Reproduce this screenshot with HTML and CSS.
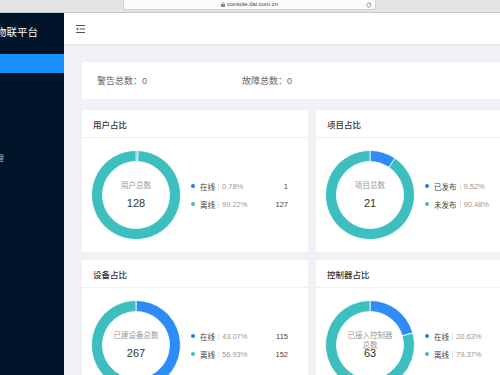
FILE: index.html
```html
<!DOCTYPE html>
<html lang="zh-CN">
<head>
<meta charset="utf-8">
<title>物联平台</title>
<link rel="stylesheet" href="styles.css">
</head>
<body>
<div class="browser-bar">
  <div class="url-field">
    <span></span>
    <span class="url">
      <svg class="lock" width="4" height="5" viewBox="0 0 4 5"><rect x="0" y="2" width="4" height="3" fill="#888"/><path d="M1 2V1.2a1 1 0 0 1 2 0V2" fill="none" stroke="#888" stroke-width="0.6"/></svg>
      console.tlai.com.cn
    </span>
    <svg class="refresh" width="6" height="6" viewBox="0 0 6 6"><path d="M4.9 2.4A2.1 2.1 0 1 0 5 3.4" fill="none" stroke="#777" stroke-width="0.7"/><path d="M3.9 0.8L5.2 2.4L3.5 2.7Z" fill="#777"/></svg>
  </div>
</div>
<div class="app">
  <aside class="sider">
    <div class="logo"><span>物联平台</span></div>
    <ul class="menu">
      <li class="active"></li>
      <li></li>
      <li></li>
      <li></li>
      <li><span class="cut">管理</span></li>
    </ul>
  </aside>
  <div class="main">
    <header class="topbar">
      <svg class="fold" width="9" height="8" viewBox="0 0 9 8"><path d="M0 0.5H9M3.5 4H9M0 7.5H9" stroke="#555" stroke-width="1"/><path d="M0 4L2.2 2.4V5.6Z" fill="#555"/></svg>
    </header>
    <div class="content">
      <div class="stats">
        <div class="stat">警告总数：0</div>
        <div class="stat">故障总数：0</div>
      </div>
      <div class="grid">
        <section class="card">
          <div class="card-head">用户占比</div>
          <div class="card-body">
            <div class="donut">
              <svg width="90" height="90" viewBox="0 0 90 90">
                <path class="seg-b" d="M45 0.5A44.5 44.5 0 0 1 47.18 0.55L46.64 11.54A33.5 33.5 0 0 0 45 11.5Z"/>
                <path class="seg-t" d="M47.18 0.55A44.5 44.5 0 1 1 45 0.5L45 11.5A33.5 33.5 0 1 0 46.64 11.54Z"/>
              </svg>
              <div class="donut-title">用户总数</div>
              <div class="donut-value">128</div>
            </div>
            <div class="legend">
              <div class="legend-row"><i class="dot dot-b"></i><span class="name">在线</span><i class="sep"></i><span class="pct">0.78%</span><span class="val">1</span></div>
              <div class="legend-row"><i class="dot dot-t"></i><span class="name">离线</span><i class="sep"></i><span class="pct">99.22%</span><span class="val">127</span></div>
            </div>
          </div>
        </section>
        <section class="card">
          <div class="card-head">项目占比</div>
          <div class="card-body">
            <div class="donut">
              <svg width="90" height="90" viewBox="0 0 90 90">
                <path class="seg-b" d="M45 0.5A44.5 44.5 0 0 1 70.06 8.23L63.86 17.32A33.5 33.5 0 0 0 45 11.5Z"/>
                <path class="seg-t" d="M70.06 8.23A44.5 44.5 0 1 1 45 0.5L45 11.5A33.5 33.5 0 1 0 63.86 17.32Z"/>
              </svg>
              <div class="donut-title">项目总数</div>
              <div class="donut-value">21</div>
            </div>
            <div class="legend">
              <div class="legend-row"><i class="dot dot-b"></i><span class="name">已发布</span><i class="sep"></i><span class="pct">9.52%</span><span class="val">2</span></div>
              <div class="legend-row"><i class="dot dot-t"></i><span class="name">未发布</span><i class="sep"></i><span class="pct">90.48%</span><span class="val">19</span></div>
            </div>
          </div>
        </section>
        <section class="card">
          <div class="card-head">设备占比</div>
          <div class="card-body">
            <div class="donut">
              <svg width="90" height="90" viewBox="0 0 90 90">
                <path class="seg-b" d="M45 0.5A44.5 44.5 0 0 1 63.77 85.34L59.13 75.37A33.5 33.5 0 0 0 45 11.5Z"/>
                <path class="seg-t" d="M63.77 85.34A44.5 44.5 0 1 1 45 0.5L45 11.5A33.5 33.5 0 1 0 59.13 75.37Z"/>
              </svg>
              <div class="donut-title">已建设备总数</div>
              <div class="donut-value">267</div>
            </div>
            <div class="legend">
              <div class="legend-row"><i class="dot dot-b"></i><span class="name">在线</span><i class="sep"></i><span class="pct">43.07%</span><span class="val">115</span></div>
              <div class="legend-row"><i class="dot dot-t"></i><span class="name">离线</span><i class="sep"></i><span class="pct">56.93%</span><span class="val">152</span></div>
            </div>
          </div>
        </section>
        <section class="card">
          <div class="card-head">控制器占比</div>
          <div class="card-body">
            <div class="donut">
              <svg width="90" height="90" viewBox="0 0 90 90">
                <path class="seg-b" d="M45 0.5A44.5 44.5 0 0 1 87.83 32.94L77.24 35.92A33.5 33.5 0 0 0 45 11.5Z"/>
                <path class="seg-t" d="M87.83 32.94A44.5 44.5 0 1 1 45 0.5L45 11.5A33.5 33.5 0 1 0 77.24 35.92Z"/>
              </svg>
              <div class="donut-title">已接入控制器总数</div>
              <div class="donut-value">63</div>
            </div>
            <div class="legend">
              <div class="legend-row"><i class="dot dot-b"></i><span class="name">在线</span><i class="sep"></i><span class="pct">20.63%</span><span class="val">13</span></div>
              <div class="legend-row"><i class="dot dot-t"></i><span class="name">离线</span><i class="sep"></i><span class="pct">79.37%</span><span class="val">50</span></div>
            </div>
          </div>
        </section>
      </div>
    </div>
  </div>
</div>
</body>
</html>
```
FILE: styles.css
```css
html, body {
  margin: 0;
  padding: 0;
}
body {
  width: 500px;
  height: 375px;
  overflow: hidden;
  background: #f0f2f5;
  font-family: "Liberation Sans", "Noto Sans CJK SC", sans-serif;
}

.browser-bar {
  height: 12px;
  background: #e4e4e4;
  border-bottom: 1px solid #c9c9c9;
  padding-left: 123px;
}
.url-field {
  box-sizing: border-box;
  width: 253px;
  height: 10px;
  background: #fbfbfb;
  border: 1px solid #d2d2d2;
  border-top: none;
  border-radius: 0 0 3px 3px;
  display: grid;
  grid-template-columns: 1fr auto 1fr;
  align-items: center;
  font-size: 6px;
  color: #444;
  line-height: 9px;
}
.url {
  display: flex;
  align-items: center;
  gap: 2px;
  white-space: nowrap;
}
.refresh {
  justify-self: end;
  margin-right: 3px;
}

.app {
  display: flex;
  height: 362px;
}
.sider {
  width: 64px;
  flex: none;
  background: #001529;
  overflow: hidden;
}
.logo {
  height: 37px;
  display: flex;
  align-items: center;
  color: #fff;
  font-size: 10.5px;
  white-space: nowrap;
}
.logo span {
  margin-left: -4px;
}
.menu {
  list-style: none;
  margin: 4px 0 0;
  padding: 0;
  display: flex;
  flex-direction: column;
  gap: 4.5px;
}
.menu li {
  height: 19px;
  display: flex;
  align-items: center;
  font-size: 8px;
  color: #a6adb4;
  white-space: nowrap;
}
.menu li.active {
  background: #1890ff;
}
.menu .cut {
  margin-left: -12px;
}

.main {
  flex: 1;
  min-width: 0;
  display: flex;
  flex-direction: column;
  overflow: hidden;
}
.topbar {
  flex: none;
  height: 31px;
  background: #fff;
  border-bottom: 1px solid #e8e8e8;
  display: flex;
  align-items: center;
  padding-left: 12px;
}
.content {
  padding: 17px 0 0 18px;
}
.stats {
  box-sizing: border-box;
  width: 460px;
  height: 37px;
  background: #fff;
  display: flex;
  align-items: center;
  padding-left: 15px;
  font-size: 9px;
  color: #666;
}
.stat {
  width: 145px;
  white-space: nowrap;
}
.grid {
  margin-top: 11px;
  display: grid;
  grid-template-columns: 226px 226px;
  gap: 8px;
}
.card {
  background: #fff;
}
.card-head {
  height: 27px;
  border-bottom: 1px solid #eef0f2;
  padding-left: 11px;
  display: flex;
  align-items: center;
  font-size: 8.5px;
  font-weight: 500;
  color: #333;
}
.card-body {
  display: flex;
  align-items: center;
  padding: 12px 20px 12px 9px;
}
.donut {
  position: relative;
  width: 90px;
  height: 90px;
  flex: none;
}
.donut svg {
  display: block;
}
.seg-b {
  fill: #2d8cf6;
  stroke: #fff;
  stroke-width: 0.8;
}
.seg-t {
  fill: #3dbfbf;
  stroke: #fff;
  stroke-width: 0.8;
}
.donut-title {
  position: absolute;
  top: 31px;
  left: 20px;
  right: 20px;
  text-align: center;
  font-size: 7.5px;
  line-height: 10px;
  color: #999;
}
.donut-value {
  position: absolute;
  top: 46px;
  left: 0;
  right: 0;
  text-align: center;
  font-size: 11px;
  line-height: 14px;
  color: #333;
}
.legend {
  flex: 1;
  margin-left: 10px;
  display: flex;
  flex-direction: column;
  gap: 8px;
}
.legend-row {
  display: flex;
  align-items: center;
  height: 10px;
  font-size: 7.5px;
  color: #444;
  white-space: nowrap;
}
.dot {
  width: 4px;
  height: 4px;
  border-radius: 50%;
  margin-right: 5px;
  flex: none;
}
.dot-b { background: #1f7fe8; }
.dot-t { background: #3dbfbf; }
.sep {
  width: 1px;
  height: 7px;
  background: #e2e2e2;
  margin: 0 3px;
}
.pct {
  color: #999;
}
.val {
  margin-left: auto;
  color: #444;
}
```
